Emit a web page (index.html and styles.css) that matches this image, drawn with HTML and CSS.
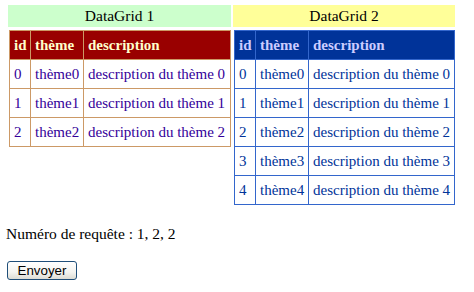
FILE: index.html
```html
<!DOCTYPE html>
<html>
<head>
<meta charset="utf-8">
<link rel="stylesheet" href="styles.css">
</head>
<body>
<div class="grids">
  <div class="col col1">
    <div class="caption green">DataGrid 1</div>
    <table class="grid classic">
      <tr><th class="c-id">id</th><th class="c-th">thème</th><th class="c-desc">description</th></tr>
      <tr><td>0</td><td>thème0</td><td>description du thème 0</td></tr>
      <tr><td>1</td><td>thème1</td><td>description du thème 1</td></tr>
      <tr><td>2</td><td>thème2</td><td>description du thème 2</td></tr>
    </table>
  </div>
  <div class="col col2">
    <div class="caption yellow">DataGrid 2</div>
    <table class="grid blue">
      <tr><th class="c-id">id</th><th class="c-th">thème</th><th class="c-desc">description</th></tr>
      <tr><td>0</td><td>thème0</td><td>description du thème 0</td></tr>
      <tr><td>1</td><td>thème1</td><td>description du thème 1</td></tr>
      <tr><td>2</td><td>thème2</td><td>description du thème 2</td></tr>
      <tr><td>3</td><td>thème3</td><td>description du thème 3</td></tr>
      <tr><td>4</td><td>thème4</td><td>description du thème 4</td></tr>
    </table>
  </div>
</div>
<p class="info">Numéro de requête : 1, 2, 2</p>
<button class="btn" type="button">Envoyer</button>
</body>
</html>
```

FILE: styles.css
```css
body {
  margin: 0;
  padding: 5px 0 0 7px;
  font-family: "Liberation Serif", "Times New Roman", serif;
  font-size: 16px;
  color: #000;
  background: #fff;
}
.grids {
  display: flex;
  gap: 2px;
  align-items: flex-start;
  margin-left: 1px;
}
.col1 { width: 223px; }
.col2 { width: 222px; }
.caption {
  height: 22px;
  line-height: 22px;
  text-align: center;
  margin-bottom: 3px;
  font-size: 15.5px;
}
.green { background: #ccffcc; }
.yellow { background: #ffff99; }
.grid {
  border-collapse: collapse;
  margin-left: 1px;
  table-layout: fixed;
  font-size: 15px;
}
.classic { width: 222px; }
.blue { width: 221px; }
.grid th, .grid td {
  height: 29px;
  padding: 0 4px;
  text-align: left;
  white-space: nowrap;
  box-sizing: border-box;
}
.grid th { font-weight: bold; }
.c-id { width: 21px; }
.c-th { width: 53px; }
.classic th, .classic td { border: 1px solid #cc9966; }
.classic th { background: #990000; color: #ffffcc; }
.classic td { color: #330099; background: #fff; }
.blue th, .blue td { border: 1px solid #3366cc; }
.blue th { background: #003399; color: #ccccff; }
.blue td { color: #003399; background: #fff; }
.info {
  margin: 20px 0 0 -1px;
  line-height: 18px;
  font-size: 15.5px;
}
.btn {
  margin: 18px 0 0 0;
  width: 70px;
  height: 19px;
  padding: 0;
  font-family: "Liberation Sans", Arial, sans-serif;
  font-size: 13.33px;
  color: #000;
  border: 1px solid #1f4e79;
  border-radius: 3px;
  background: linear-gradient(#ffffff, #f4f4f0 60%, #dcdcd4);
  line-height: 15px;
}
```
